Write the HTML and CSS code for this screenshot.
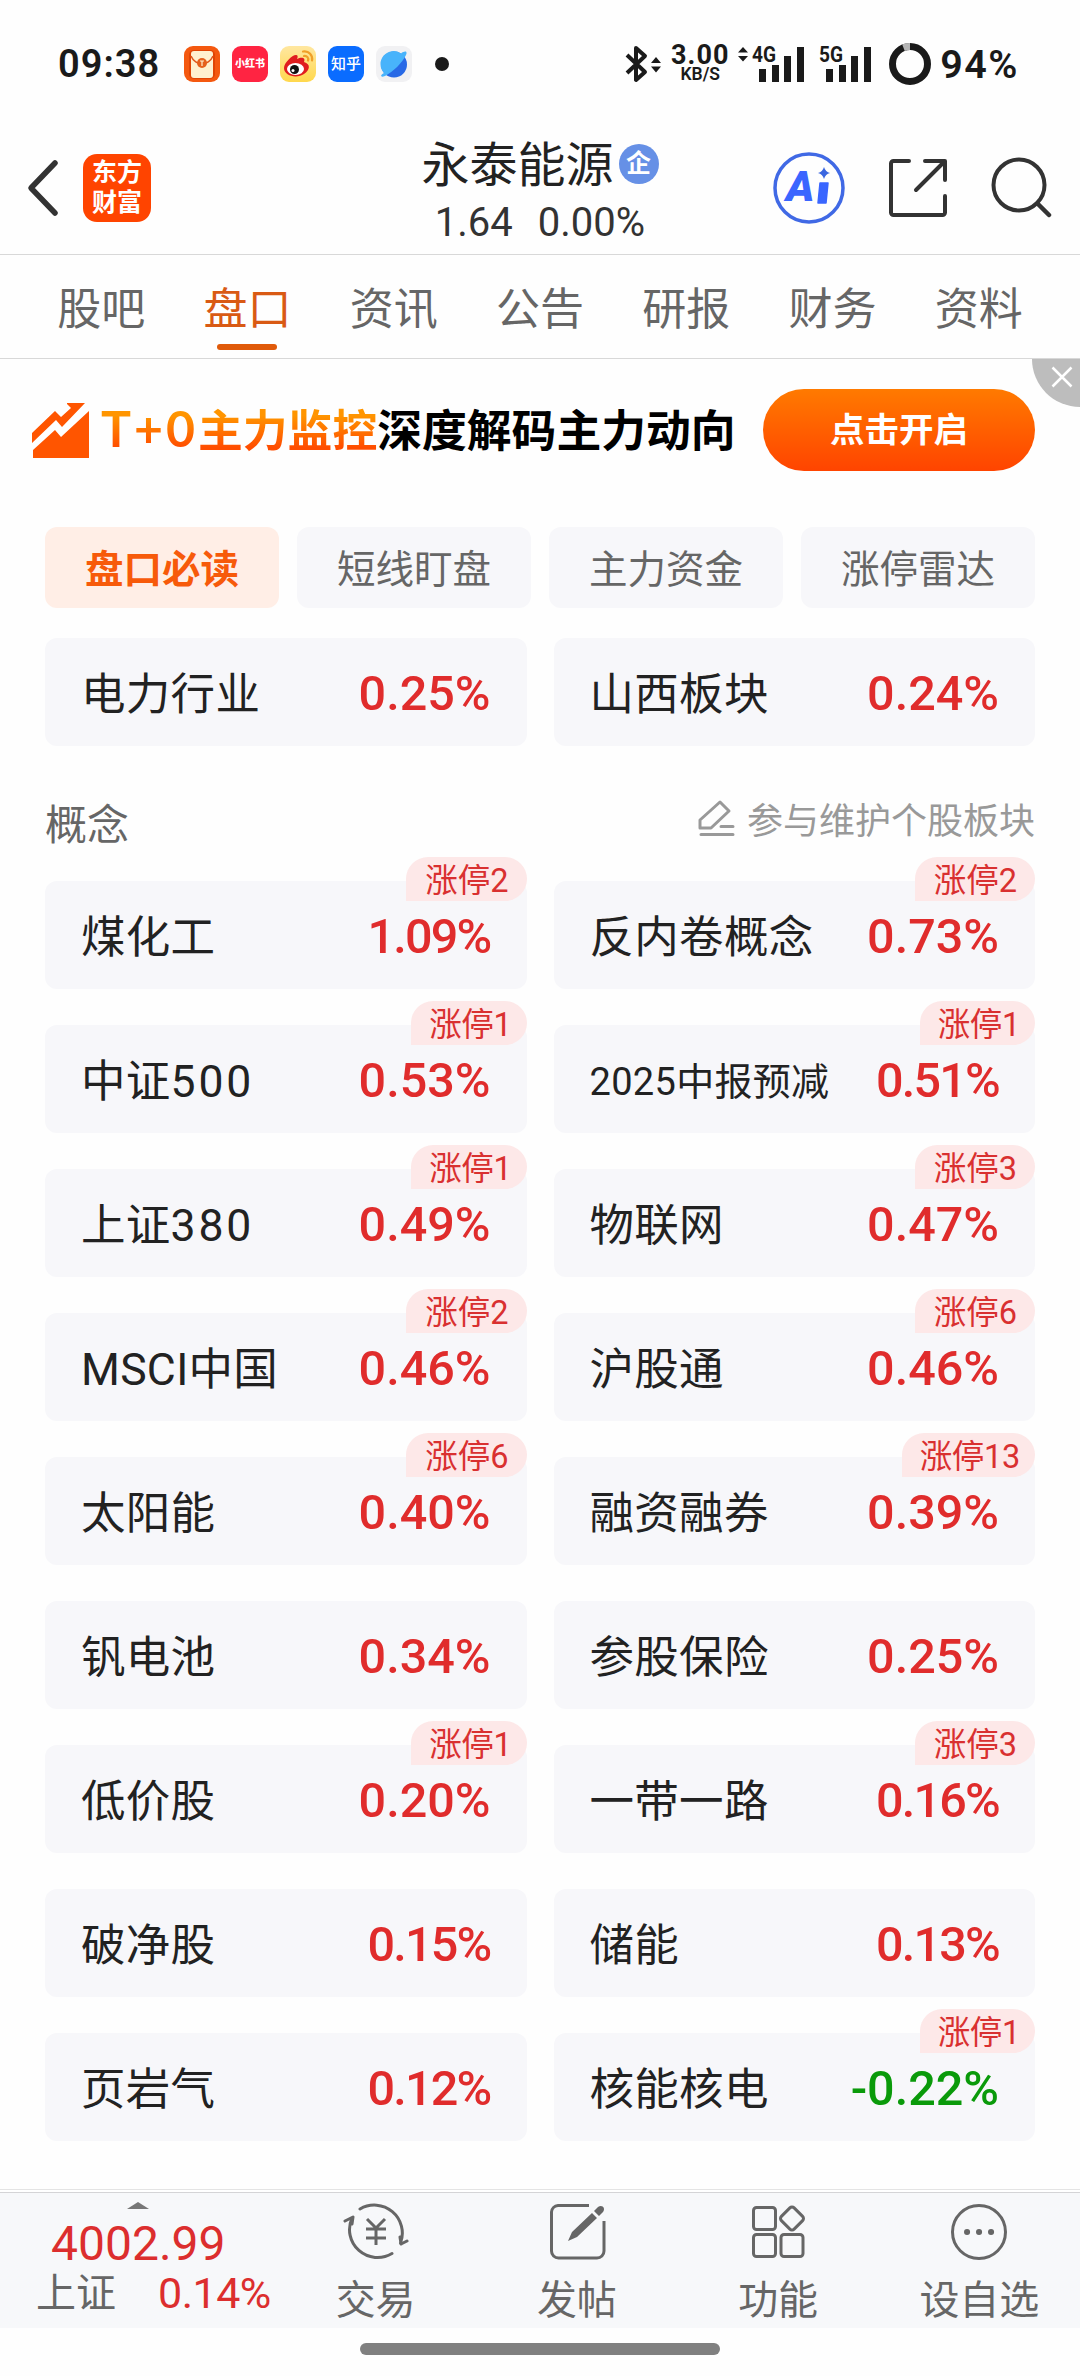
FILE: index.html
```html
<!DOCTYPE html>
<html lang="zh-CN">
  <head>
    <meta charset="UTF-8" />
    <meta name="viewport" content="width=device-width, initial-scale=1.0" />
    <title>永泰能源 - 盘口</title>
    <link rel="stylesheet" href="styles.css">
  </head>
  <body>
    <div class="status">
      <span class="time">09:38</span>
      <div class="apps">
        <svg width="36" height="36" viewBox="0 0 36 36">
          <rect width="36" height="36" rx="9" fill="#f4580f" />
          <rect x="5" y="4" width="26" height="29" rx="5" fill="#e04404" />
          <rect x="7" y="5" width="22" height="27" rx="3" fill="#fff0cf" />
          <path d="M7 10c2 5 7 8 11 8s9-3 11-8" fill="none" stroke="#e0561a" stroke-width="1.5" />
          <circle cx="18" cy="17" r="5" fill="#e5601c" />
          <path d="M16 15h4M18 15v5" stroke="#fff0cf" stroke-width="1.2" />
        </svg>
        <div class="app app-xhs">小红书</div>
        <svg width="36" height="36" viewBox="0 0 36 36">
          <defs>
            <linearGradient id="weibo" x1="0" y1="0" x2="0" y2="1">
              <stop offset="0" stop-color="#ffe7a0" />
              <stop offset="1" stop-color="#ffd84d" />
            </linearGradient>
          </defs>
          <rect width="36" height="36" rx="9" fill="url(#weibo)" />
          <path d="M4 22c0-5 8-13 12-13 2 0 2 2 1 4 4-2 9-2 7 3 7 2 6 8 0 12-7 5-20 2-20-6z" fill="#e01d1f" />
          <ellipse cx="15.500" cy="23" rx="8.500" ry="6" fill="#fff" />
          <circle cx="14.500" cy="23.500" r="4.500" fill="#111" />
          <circle cx="13" cy="24.500" r="1.500" fill="#fff" />
          <path d="M23 5.500c6-1 10 4 9 9M24 10c3-.5 5 2 4 4.500" fill="none" stroke="#f0a028" stroke-width="2.200" stroke-linecap="round" />
        </svg>
        <div class="app app-zhihu">知乎</div>
        <svg width="36" height="36" viewBox="0 0 36 36">
          <rect width="36" height="36" rx="9" fill="#f1f1f3" />
          <circle cx="18" cy="18.500" r="13" fill="#2869e6" />
          <path d="M8 27A13 13 0 0 1 25 7.500c3-2.500 7-3 5 1.500C26 17 18 25 9 30c-5 2-5-1-1-3z" fill="#48b3fb" />
        </svg>
      </div>
      <span class="dot"></span>

      <div class="sys">
        <svg width="36" height="38" viewBox="0 0 36 38">
          <path d="M2 10l18 17-9 8V3l9 8L2 28" fill="none" stroke="#1a1a1a" stroke-width="4" stroke-linejoin="round" />
          <path d="M26 18l5-6 5 6zM26 21.500h10l-5 6z" fill="#1a1a1a" />
        </svg>
        <div class="speed">
          <b>3.00</b>
          <span>KB/S</span>
        </div>
        <svg class="signal" width="70" height="50" viewBox="0 -6 70 50">
          <path d="M0 7.500l5-5.500 5 5.500zM0 11h10l-5 5.500z" fill="#1a1a1a" />
          <text x="14" y="17" textLength="24" lengthAdjust="spacingAndGlyphs">4G</text>
          <path d="M21 24h7v13h-7zM34 20h7v17h-7zM46 11h7v26h-7zM59 2h7v35h-7z" fill="#1a1a1a" />
        </svg>
        <svg class="signal" width="54" height="50" viewBox="0 -6 54 50">
          <text x="0" y="17" textLength="24" lengthAdjust="spacingAndGlyphs">5G</text>
          <path d="M7 24h7v13H7zM20 20h7v17h-7zM32 11h7v26h-7zM45 2h7v35h-7z" fill="#1a1a1a" />
        </svg>
        <svg class="ring" width="42" height="42" viewBox="0 0 42 42">
          <circle cx="21" cy="21" r="17.500" fill="none" stroke="#1a1a1a" stroke-width="7" />
          <path d="M14.500 4.700A17.500 17.500 0 0 1 21 3.500" fill="none" stroke="#b5b5b5" stroke-width="7" />
        </svg>
        <span class="battery">94%</span>
      </div>
    </div>

    <div class="header">
      <div class="header-left">
        <svg width="34" height="58" viewBox="0 0 34 58">
          <path d="M29 4L5 29l24 25" fill="none" stroke="#333" stroke-width="5.500" stroke-linecap="round" stroke-linejoin="round" />
        </svg>
        <div class="logo">东方<br>财富</div>
      </div>
      <div class="stock">
        <div class="stock-name">永泰能源<span class="corp">企</span></div>
        <div class="stock-price"><span>1.64</span><span>0.00%</span></div>
      </div>
      <div class="header-right">
        <svg width="74" height="74" viewBox="0 0 74 74">
          <circle cx="37" cy="37" r="34" fill="none" stroke="#4069e5" stroke-width="3.500" />
          <text class="ai" x="14" y="50" textLength="27">A</text>
          <path d="M48 32h8l-2 20h-8z" fill="#3a66ff" stroke="#3a66ff" stroke-width="1.500" stroke-linejoin="round" />
          <path d="M52 16q1.500 5 6 6-4.500 1-6 6-1.500-5-6-6 4.500-1 6-6z" fill="#3a66e0" />
        </svg>
        <svg width="60" height="60" viewBox="0 0 60 60">
          <path d="M21 3H5.500A2.500 2.500 0 0 0 3 5.500v49A2.500 2.500 0 0 0 5.500 57h49a2.500 2.500 0 0 0 2.500-2.500V38M37 3h20v19M56 4L28 32" fill="none" stroke="#333" stroke-width="4" stroke-linecap="round" stroke-linejoin="round" />
        </svg>
        <svg width="62" height="62" viewBox="0 0 62 62">
          <circle cx="29" cy="28" r="25.500" fill="none" stroke="#333" stroke-width="4" />
          <path d="M48 47l11 11" stroke="#333" stroke-width="4.500" stroke-linecap="round" />
        </svg>
      </div>
    </div>

    <div class="tabs">
      <div class="tab">股吧</div>
      <div class="tab active">盘口</div>
      <div class="tab">资讯</div>
      <div class="tab">公告</div>
      <div class="tab">研报</div>
      <div class="tab">财务</div>
      <div class="tab">资料</div>
    </div>

    <div class="banner">
      <svg width="57" height="57" viewBox="0 0 57 57">
        <path d="M0 31L23 9l6 6 10-9-4-4V1h18L30 25l-6-7L0 41z" fill="#ff5500" />
        <path d="M1 48l22-20 6 7L57 9v47H1z" fill="#ff5500" />
      </svg>
      <div class="banner-text"><span class="banner-hot"><span class="t0">T+0</span>主力监控</span>深度解码主力动向</div>
      <div class="banner-btn">点击开启</div>
      <div class="close">
        <svg width="22" height="22" viewBox="0 0 22 22">
          <path d="M1.500 1.500l19 19M20.500 1.500l-19 19" stroke="#fff" stroke-width="2.500" />
        </svg>
      </div>
    </div>

    <div class="main">
      <div class="segments">
        <div class="segment active">盘口必读</div>
        <div class="segment">短线盯盘</div>
        <div class="segment">主力资金</div>
        <div class="segment">涨停雷达</div>
      </div>

      <div class="grid">
        <div class="card"><span class="name">电力行业</span><span class="rate">0.25%</span></div>
        <div class="card"><span class="name">山西板块</span><span class="rate">0.24%</span></div>
      </div>

      <div class="section">
        <span class="section-title">概念</span>
        <div class="edit">
          <svg width="37" height="38" viewBox="0 0 37 38">
            <path d="M2 29v-8L22 3l9 9-18 17z" fill="none" stroke="#999" stroke-width="3" stroke-linejoin="round" />
            <path d="M23 27.500h12M3 35.500h32" stroke="#999" stroke-width="3" stroke-linecap="round" />
          </svg>
          <span>参与维护个股板块</span>
        </div>
      </div>

      <div class="grid">
        <div class="card"><span class="name">煤化工</span><span class="rate tight">1.09%</span><span class="limit">涨停2</span></div>
        <div class="card"><span class="name">反内卷概念</span><span class="rate">0.73%</span><span class="limit">涨停2</span></div>
        <div class="card"><span class="name">中证<span class="num">500</span></span><span class="rate">0.53%</span><span class="limit tight">涨停1</span></div>
        <div class="card"><span class="name small">2025中报预减</span><span class="rate tight">0.51%</span><span class="limit tight">涨停1</span></div>
        <div class="card"><span class="name">上证<span class="num">380</span></span><span class="rate">0.49%</span><span class="limit tight">涨停1</span></div>
        <div class="card"><span class="name">物联网</span><span class="rate">0.47%</span><span class="limit">涨停3</span></div>
        <div class="card"><span class="name">MSCI中国</span><span class="rate">0.46%</span><span class="limit">涨停2</span></div>
        <div class="card"><span class="name">沪股通</span><span class="rate">0.46%</span><span class="limit">涨停6</span></div>
        <div class="card"><span class="name">太阳能</span><span class="rate">0.40%</span><span class="limit">涨停6</span></div>
        <div class="card"><span class="name">融资融券</span><span class="rate">0.39%</span><span class="limit tight">涨停13</span></div>
        <div class="card"><span class="name">钒电池</span><span class="rate">0.34%</span></div>
        <div class="card"><span class="name">参股保险</span><span class="rate">0.25%</span></div>
        <div class="card"><span class="name">低价股</span><span class="rate">0.20%</span><span class="limit tight">涨停1</span></div>
        <div class="card"><span class="name">一带一路</span><span class="rate tight">0.16%</span><span class="limit">涨停3</span></div>
        <div class="card"><span class="name">破净股</span><span class="rate tight">0.15%</span></div>
        <div class="card"><span class="name">储能</span><span class="rate tight">0.13%</span></div>
        <div class="card"><span class="name">页岩气</span><span class="rate tight">0.12%</span></div>
        <div class="card"><span class="name">核能核电</span><span class="rate down">-0.22%</span><span class="limit tight">涨停1</span></div>
      </div>
    </div>

    <div class="bottom">
      <div class="index">
        <svg width="22" height="7" viewBox="0 0 22 7">
          <path d="M0 7L11 0l11 7z" fill="#777" />
        </svg>
        <div class="index-value">4002.99</div>
        <div class="index-row"><span>上证</span><span class="index-rate">0.14%</span></div>
      </div>
      <div class="action">
        <svg width="66" height="60" viewBox="0 0 66 60" fill="none" stroke="#666" stroke-width="3" stroke-linecap="round" stroke-linejoin="round">
          <path d="M17 8A28 28 0 0 1 57.500 42M58 43l6-3M58 43l-1-7" />
          <path d="M49 52.500A28 28 0 0 1 9 17M2 20l8-4-1 7" />
          <path d="M24 18l9 9 9-9M33 27v17M23 28h20M23 37h20" stroke-linecap="butt" />
        </svg>
        <span>交易</span>
      </div>
      <div class="action">
        <svg width="60" height="60" viewBox="0 0 60 60">
          <path d="M42 4.500H11A7 7 0 0 0 4.500 11v39a7 7 0 0 0 7 7H50a7 7 0 0 0 7-7V20" fill="none" stroke="#666" stroke-width="3" />
          <path d="M21 40l4-9 20-19 5 5-20 19zM47 10l4-4c4-3 8 1 5 5l-4 4z" fill="#666" />
        </svg>
        <span>发帖</span>
      </div>
      <div class="action">
        <svg width="60" height="60" viewBox="0 0 60 60" fill="none" stroke="#666" stroke-width="3">
          <rect x="5.500" y="6.500" width="22" height="22" rx="3" />
          <rect x="5.500" y="33.500" width="22" height="22" rx="3" />
          <rect x="33" y="33.500" width="22" height="22" rx="3" />
          <rect x="35" y="8.500" width="18" height="18" rx="3" transform="rotate(45 44 17.500)" />
        </svg>
        <span>功能</span>
      </div>
      <div class="action">
        <svg width="60" height="60" viewBox="0 0 60 60">
          <circle cx="30" cy="31" r="26.500" fill="none" stroke="#666" stroke-width="3" />
          <path d="M18 31h.1M30 31h.1M42 31h.1" stroke="#666" stroke-width="6" stroke-linecap="round" />
        </svg>
        <span>设自选</span>
      </div>
    </div>
    <div class="home"></div>
  </body>
</html>
```
FILE: styles.css
```css
* {
  box-sizing: border-box;
}
body {
  margin: 0;
  width: 1080px;
  height: 2376px;
  overflow: hidden;
  display: flex;
  flex-direction: column;
  font-family: Roboto, "Noto Sans CJK SC", sans-serif;
  background-color: #fefefe;
  color: #222;
}
svg {
  display: block;
  flex-shrink: 0;
}

/* status bar */
.status {
  height: 128px;
  padding: 0 61px 0 58px;
  display: flex;
  align-items: center;
  color: #1a1a1a;
}
.time {
  width: 126px;
  font-size: 38px;
  font-weight: 600;
  letter-spacing: 1px;
}
.apps {
  display: flex;
  gap: 12px;
}
.app {
  width: 36px;
  height: 36px;
  border-radius: 9px;
  color: #fff;
  text-align: center;
  line-height: 36px;
  white-space: nowrap;
}
.app-xhs {
  background-color: #ff2442;
  font-size: 10px;
  font-weight: 900;
}
.app-zhihu {
  background-color: #0a6cff;
  font-size: 15px;
  font-weight: 500;
}
.dot {
  width: 14px;
  height: 14px;
  margin-left: 23px;
  border-radius: 50%;
  background-color: #1a1a1a;
}
.sys {
  margin-left: auto;
  display: flex;
  align-items: center;
}
.speed {
  width: 60px;
  margin: 0 8px 0 9px;
  display: flex;
  flex-direction: column;
  align-items: center;
}
.speed b {
  font-size: 27px;
  line-height: 21px;
  letter-spacing: 1px;
}
.speed span {
  font-size: 17.500px;
  font-weight: 600;
  line-height: 17px;
}
.signal {
  margin-right: 11px;
}
.signal text {
  font-size: 22px;
  font-weight: 700;
  fill: #1a1a1a;
}
.ring {
  margin: 0 9px 0 5px;
}
.battery {
  font-size: 39.500px;
  font-weight: 600;
  letter-spacing: 1.500px;
}

/* header */
.header {
  height: 127px;
  padding: 0 28px 7px 26px;
  display: grid;
  grid-template-columns: 1fr auto 1fr;
  align-items: center;
  border-bottom: 1px solid #d8d8d8;
}
.header-left {
  display: flex;
  align-items: center;
  gap: 23px;
}
.logo {
  width: 68px;
  height: 68px;
  border-radius: 14px;
  background-color: #ff4400;
  color: #fff;
  font-size: 25px;
  font-weight: 700;
  line-height: 30px;
  padding-top: 4px;
  text-align: center;
}
.stock {
  display: flex;
  flex-direction: column;
  align-items: center;
  padding: 9px 0 0 2px;
}
.stock-name {
  display: flex;
  align-items: center;
  font-size: 48px;
  line-height: 56px;
}
.corp {
  width: 40px;
  height: 40px;
  margin: -3px 0 0 5px;
  border-radius: 50%;
  background-color: #6690e6;
  color: #fff;
  font-size: 25px;
  font-weight: 700;
  line-height: 40px;
  text-align: center;
}
.stock-price {
  display: flex;
  gap: 25px;
  margin-top: 5px;
  font-size: 40px;
  line-height: 48px;
  color: #333;
}
.header-right {
  display: flex;
  align-items: center;
  justify-content: flex-end;
  gap: 42px;
}
.ai {
  font-size: 43px;
  font-weight: 900;
  font-style: italic;
  fill: #3a66ff;
}

/* tabs */
.tabs {
  height: 104px;
  padding: 0 28px;
  display: flex;
  border-bottom: 1px solid #d8d8d8;
}
.tab {
  flex: 1;
  position: relative;
  text-align: center;
  font-size: 44px;
  line-height: 110px;
  color: #666;
}
.tab.active {
  color: #d95a14;
}
.tab.active::after {
  content: "";
  position: absolute;
  left: 50%;
  bottom: 8px;
  width: 60px;
  height: 6px;
  margin-left: -30px;
  border-radius: 3px;
  background-color: #e05a0a;
}

/* banner */
.banner {
  position: relative;
  height: 142px;
  padding: 0 45px 0 32px;
  display: flex;
  align-items: center;
}
.banner-text {
  margin: -1px 0 0 12px;
  font-size: 44.800px;
  font-weight: 700;
  line-height: 60px;
  white-space: nowrap;
  color: #000;
}
.banner-hot {
  background: linear-gradient(#ff9500 20%, #ff4d00 80%);
  -webkit-background-clip: text;
  background-clip: text;
  color: transparent;
}
.t0 {
  font-family: Lato, sans-serif;
  font-size: 50px;
  letter-spacing: 3px;
}
.banner-btn {
  width: 272px;
  height: 82px;
  margin-left: auto;
  border-radius: 41px;
  background: linear-gradient(#ff7a00, #ff4400);
  color: #fff;
  font-size: 34.500px;
  font-weight: 700;
  line-height: 83px;
  text-align: center;
}
.close {
  position: absolute;
  top: 0;
  right: 0;
  width: 48px;
  height: 48px;
  padding: 7px 0 0 19px;
  border-bottom-left-radius: 48px;
  background-color: #bdbdbd;
}

/* content */
.main {
  height: 1688px;
  padding: 26px 45px 0;
}
.segments {
  display: flex;
  gap: 18px;
  margin-bottom: 30px;
}
.segment {
  flex: 1;
  height: 81px;
  border-radius: 12px;
  background-color: #f7f7fa;
  color: #666;
  font-size: 38.500px;
  line-height: 86px;
  text-align: center;
}
.segment.active {
  background-color: #ffeee6;
  color: #f75a0a;
  font-weight: 700;
}
.grid {
  display: grid;
  grid-template-columns: 1fr 1fr;
  column-gap: 27px;
  row-gap: 36px;
}
.card {
  position: relative;
  height: 108px;
  padding: 0 36px;
  display: flex;
  align-items: center;
  justify-content: space-between;
  border-radius: 12px;
  background-color: #f7f7fa;
}
.name {
  font-size: 44.500px;
  letter-spacing: 0.300px;
  line-height: 60px;
  padding-top: 5px;
}
.name.small {
  font-size: 38px;
}
.num {
  letter-spacing: 2.800px;
}
.rate {
  font-size: 48.500px;
  font-weight: 500;
  line-height: 60px;
  padding-top: 4px;
  color: #e02c2c;
}
.rate.tight {
  letter-spacing: -1.800px;
}
.rate.down {
  color: #0a9a0a;
}
.limit {
  position: absolute;
  top: -24px;
  right: 0;
  height: 44px;
  padding: 0 18px 0 19px;
  border-radius: 22px 22px 22px 0;
  background-color: #fde8e8;
  color: #d93030;
  font-size: 32.500px;
  line-height: 48px;
}
.limit.tight {
  padding: 0 15px 0 18px;
  letter-spacing: -0.300px;
}
.section {
  height: 135px;
  padding-top: 15px;
  display: flex;
  align-items: center;
  justify-content: space-between;
  color: #666;
}
.section-title {
  font-size: 42px;
}
.edit {
  display: flex;
  align-items: center;
  gap: 12px;
  margin-top: -6px;
  color: #999;
  font-size: 36px;
}

/* bottom bar */
.bottom {
  height: 139px;
  display: flex;
  border-top: 1px solid #e4e4e4;
  background-color: #f7f8fa;
  color: #666;
  box-shadow: inset 0 2px #fff, inset 0 3px #d4d4d6;
}
.index {
  width: 275px;
  padding-top: 12px;
}
.index svg {
  margin-left: 127px;
}
.index-value {
  margin: 7px 0 0 51px;
  font-size: 48px;
  line-height: 56px;
  color: #dc2e2e;
}
.index-row {
  display: flex;
  gap: 42px;
  margin-left: 36px;
  font-size: 40px;
  line-height: 43px;
}
.index-rate {
  font-size: 43px;
  letter-spacing: -0.500px;
  color: #dc2e2e;
}
.action {
  flex: 1;
  padding-top: 11px;
  display: flex;
  flex-direction: column;
  align-items: center;
}
.action span {
  font-size: 40px;
  line-height: 60px;
  margin-top: 10px;
}
.home {
  width: 360px;
  height: 12px;
  margin: 15px auto 0;
  border-radius: 6px;
  background-color: #808080;
}
```
